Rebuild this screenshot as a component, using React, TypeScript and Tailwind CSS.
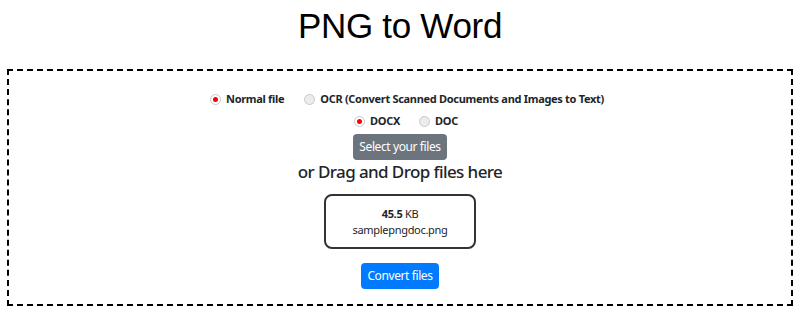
import React from "react";

function Radio({ checked }: { checked: boolean }) {
  return (
    <span
      className={
        "inline-flex items-center justify-center w-[11px] h-[11px] rounded-full border border-[#c9c9c9] " +
        (checked ? "bg-white" : "bg-[#ececec]")
      }
    >
      {checked ? <span className="w-[5px] h-[5px] rounded-full bg-[#ff0000]" /> : null}
    </span>
  );
}

export default function App() {
  const ui = { fontFamily: '"Noto Sans", "Open Sans", sans-serif' };
  return (
    <div className="w-[800px] h-[317px] bg-white overflow-hidden" style={ui}>
      <h1
        className="text-center text-[35px] leading-[40px] pt-[6px] text-black tracking-[-0.3px]"
        style={{ fontFamily: '"Liberation Sans", Arial, sans-serif' }}
      >
        PNG to Word
      </h1>
      <div className="mx-[7px] mt-[23px] h-[237px] border-2 border-dashed border-black flex flex-col items-center pt-[20px]">
        <div className="flex items-center pl-[14px] text-[11px] font-bold text-[#212529] leading-[16px] tracking-[-0.3px]">
          <label className="flex items-center gap-[5px]">
            <Radio checked />
            <span>Normal file</span>
          </label>
          <label className="flex items-center gap-[5px] ml-[20px]">
            <Radio checked={false} />
            <span>OCR (Convert Scanned Documents and Images to Text)</span>
          </label>
        </div>
        <div className="flex items-center pl-[12px] text-[11px] font-bold text-[#212529] leading-[16px] mt-[6px] tracking-[-0.3px]">
          <label className="flex items-center gap-[5px]">
            <Radio checked />
            <span>DOCX</span>
          </label>
          <label className="flex items-center gap-[5px] ml-[19px]">
            <Radio checked={false} />
            <span>DOC</span>
          </label>
        </div>
        <button className="mt-[5px] h-[26px] w-[94px] rounded-[4px] bg-[#6c757d] text-white text-[12px] leading-[26px] tracking-[-0.4px]">
          Select your files
        </button>
        <div className="text-[17px] leading-[24px] font-medium text-[#212529] tracking-[-0.6px]">
          or Drag and Drop files here
        </div>
        <div className="mt-[10px] w-[152px] h-[55px] border-2 border-[#333333] rounded-[8px] flex flex-col items-center justify-center text-[11px] leading-[16px] text-[#212529] tracking-[-0.3px]">
          <div>
            <span className="font-bold">45.5</span> KB
          </div>
          <div>samplepngdoc.png</div>
        </div>
        <button className="mt-[14px] h-[26px] w-[78px] rounded-[4px] bg-[#007bff] text-white text-[12px] leading-[26px] tracking-[-0.4px]">
          Convert files
        </button>
      </div>
    </div>
  );
}
